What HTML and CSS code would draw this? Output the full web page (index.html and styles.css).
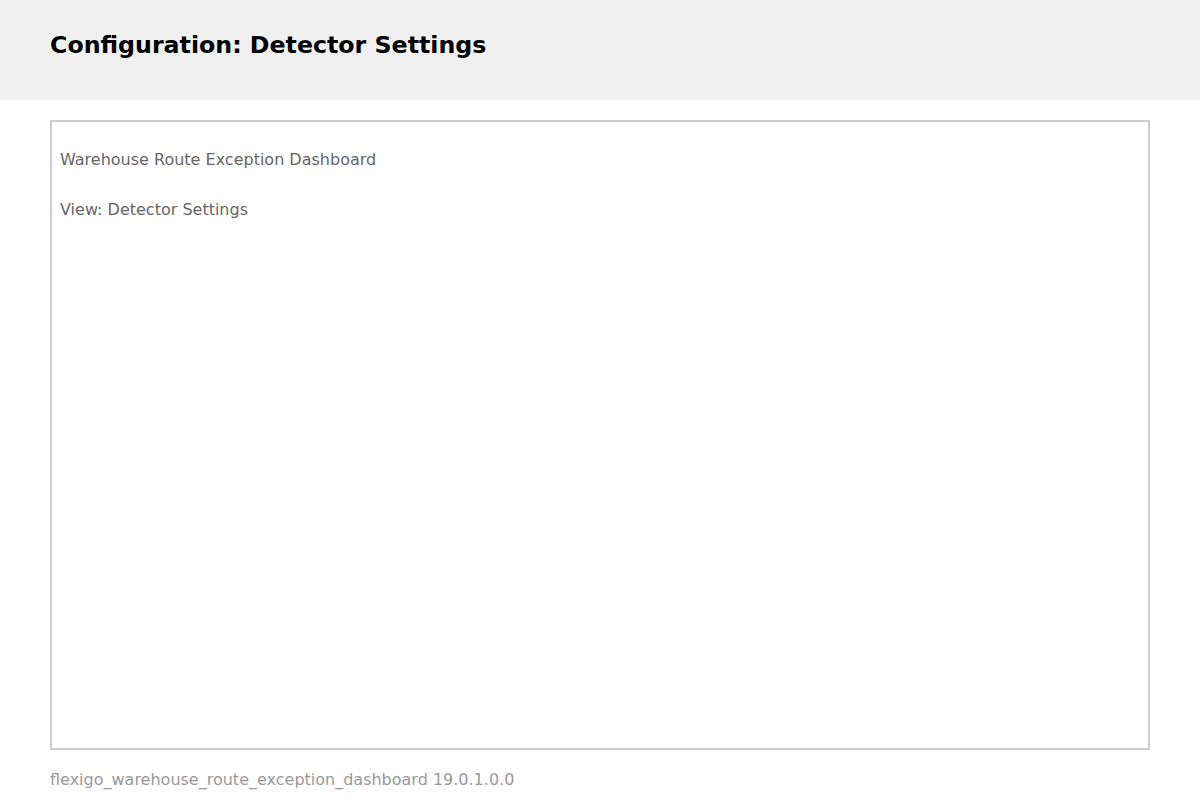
FILE: index.html
```html
<!DOCTYPE html>
<html>
<head>
<meta charset="utf-8">
<link rel="stylesheet" href="styles.css">
</head>
<body>
<header class="top-bar">
  <h1 class="page-title">Configuration: Detector Settings</h1>
</header>
<main class="content">
  <section class="panel">
    <p class="panel-line">Warehouse Route Exception Dashboard</p>
    <p class="panel-line">View: Detector Settings</p>
  </section>
</main>
<footer class="footer">flexigo_warehouse_route_exception_dashboard 19.0.1.0.0</footer>
</body>
</html>
```

FILE: styles.css
```css
html, body {
  margin: 0;
  padding: 0;
  background: #ffffff;
  font-family: "DejaVu Sans", sans-serif;
}

.top-bar {
  background: #f0f0f0;
  height: 100px;
  box-sizing: border-box;
  padding: 31px 50px 0 50px;
}

.page-title {
  margin: 0;
  font-size: 23.7px;
  font-weight: bold;
  line-height: 28px;
  color: #000000;
}

.content {
  padding: 20px 50px 0 50px;
}

.panel {
  border: 2px solid #cccccc;
  height: 630px;
  box-sizing: border-box;
  padding: 28px 8px 8px 8px;
  display: flex;
  flex-direction: column;
  gap: 30px;
}

.panel-line {
  margin: 0;
  font-size: 16px;
  line-height: 20px;
  color: #666666;
}

.footer {
  padding: 20px 50px 0 50px;
  font-size: 16px;
  line-height: 20px;
  color: #999999;
}
```
